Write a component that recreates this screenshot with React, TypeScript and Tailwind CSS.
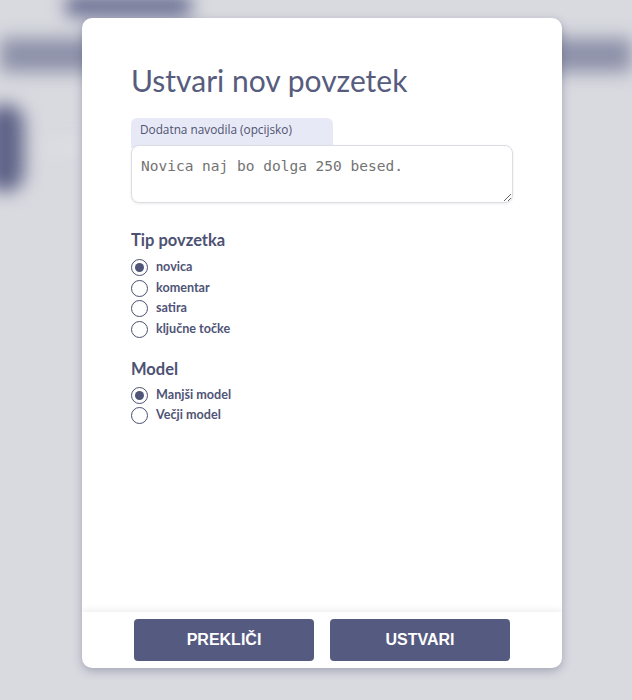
import { useState } from 'react';

const tipi = ['novica', 'komentar', 'satira', 'ključne točke'];
const modeli = ['Manjši model', 'Večji model'];

function Radio({ label, checked, onSelect }: { label: string; checked: boolean; onSelect: () => void }) {
  return (
    <label onClick={onSelect} className="flex items-center gap-[8px] h-[20.7px] cursor-pointer">
      <span className="h-[17px] w-[17px] rounded-full border border-[#4a4f6e] bg-white flex items-center justify-center">
        {checked && <span className="h-[9px] w-[9px] rounded-full bg-[#4f5479]" />}
      </span>
      <span className="text-[12.6px] font-bold text-[#4f5476]">{label}</span>
    </label>
  );
}

export default function App() {
  const [tip, setTip] = useState('novica');
  const [model, setModel] = useState('Manjši model');

  return (
    <div className="relative h-[700px] w-[632px] overflow-hidden bg-[#d9dae0] font-['Lato','Open_Sans',sans-serif]">
      {/* blurred app behind the dialog */}
      <div className="h-full blur-[9px]">
        <div className="flex h-[18px]">
          <div className="ml-[66px] w-[125px] h-[20px] -mt-[4px] rounded bg-[#62678c]" />
        </div>
        <div className="mt-[20px] h-[34px] bg-[#8d91a9]" />
        <div className="flex items-start mt-[32px]">
          <div className="-ml-[14px] h-[88px] w-[38px] rounded-full bg-[#5f6488]" />
          <div className="ml-[20px] mt-[40px] h-[6px] w-[90px] bg-[#e3e4e9]" />
        </div>
      </div>

      {/* dialog */}
      <div className="absolute left-[82px] top-[18px] w-[480px] h-[650px] bg-white rounded-[10px] shadow-[0_3px_10px_rgba(60,65,100,0.35)] flex flex-col overflow-hidden">
        <div className="flex-1 px-[49px] pt-[42px]">
          <h1 className="text-[30px] font-normal text-[#575c7e] leading-[40px]">Ustvari nov povzetek</h1>

          <div className="mt-[18px]">
            <div className="w-[202px] h-[30px] rounded-t-[6px] bg-[#e8e9f6] px-[9px] pt-[3px] text-[11.8px] text-[#4e5370] font-['Open_Sans',sans-serif]">
              Dodatna navodila (opcijsko)
            </div>
            <textarea
              className="-mt-[3px] block w-[382px] h-[58px] rounded-[8px] border border-[#dcdde3] bg-white px-[9px] pt-[10px] pb-[8px] font-['DejaVu_Sans_Mono',monospace] text-[14.5px] text-[#737373] resize-y shadow-[0_1px_3px_rgba(0,0,0,0.08)] focus:outline-none relative"
              defaultValue="Novica naj bo dolga 250 besed."
            />
          </div>

          <h2 className="mt-[26px] text-[16.5px] leading-[22px] font-bold text-[#4d5273]">Tip povzetka</h2>
          <div className="mt-[6px] flex flex-col">
            {tipi.map(t => (
              <Radio key={t} label={t} checked={tip === t} onSelect={() => setTip(t)} />
            ))}
          </div>

          <h2 className="mt-[18px] text-[16.5px] leading-[22px] font-bold text-[#4d5273]">Model</h2>
          <div className="mt-[5px] flex flex-col">
            {modeli.map(m => (
              <Radio key={m} label={m} checked={model === m} onSelect={() => setModel(m)} />
            ))}
          </div>
        </div>

        <div className="h-[56px] flex items-center justify-center gap-[16px] shadow-[0_-3px_6px_rgba(0,0,0,0.06)] relative">
          <button className="w-[180px] h-[42px] rounded-[4px] bg-[#555a80] text-white font-bold text-[16px] font-['Liberation_Sans',Arial,sans-serif]">
            PREKLIČI
          </button>
          <button className="w-[180px] h-[42px] rounded-[4px] bg-[#555a80] text-white font-bold text-[16px] font-['Liberation_Sans',Arial,sans-serif]">
            USTVARI
          </button>
        </div>
      </div>
    </div>
  );
}
